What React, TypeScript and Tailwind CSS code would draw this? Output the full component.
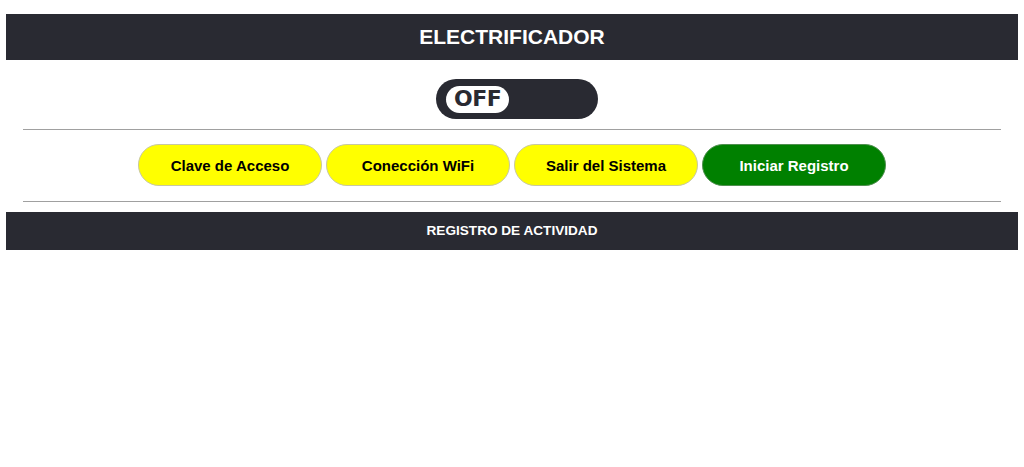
const buttons = [
  { label: "Clave de Acceso", green: false },
  { label: "Conección WiFi", green: false },
  { label: "Salir del Sistema", green: false },
  { label: "Iniciar Registro", green: true },
];

export default function App() {
  return (
    <div className="min-h-screen bg-white pt-[14px] font-['Liberation_Sans',Arial,sans-serif]">
      <header className="mx-[6px] flex h-[46px] items-center justify-center bg-[#292a32]">
        <h1 className="text-[21px] font-bold text-white">ELECTRIFICADOR</h1>
      </header>

      <div className="mt-[19px] flex justify-center pl-[10px]">
        <div className="flex h-[40px] w-[162px] items-center rounded-full bg-[#292a32] px-[10px]">
          <span className="flex h-[27px] items-center rounded-full bg-white px-[8px] font-['DejaVu_Sans',sans-serif] text-[22px] font-bold leading-none tracking-[-0.5px] text-[#292a32]">
            OFF
          </span>
        </div>
      </div>

      <hr className="mx-[23px] mt-[10px] border-t border-[#a0a0a0]" />

      <div className="mt-[14px] flex justify-center gap-[4px]">
        {buttons.map((b) => (
          <button
            key={b.label}
            className={
              b.green
                ? "h-[42px] w-[184px] rounded-full border border-[#4f8f4f] bg-[#008000] pt-[2px] text-[15px] font-bold text-white"
                : "h-[42px] w-[184px] rounded-full border border-[#c8c8a0] bg-[#ffff00] pt-[2px] text-[15px] font-bold text-black"
            }
          >
            {b.label}
          </button>
        ))}
      </div>

      <hr className="mx-[23px] mt-[15px] border-t border-[#a0a0a0]" />

      <section className="mx-[6px] mt-[10px] flex h-[38px] items-center justify-center bg-[#292a32]">
        <h2 className="text-[13.6px] font-bold text-white">REGISTRO DE ACTIVIDAD</h2>
      </section>
    </div>
  );
}
